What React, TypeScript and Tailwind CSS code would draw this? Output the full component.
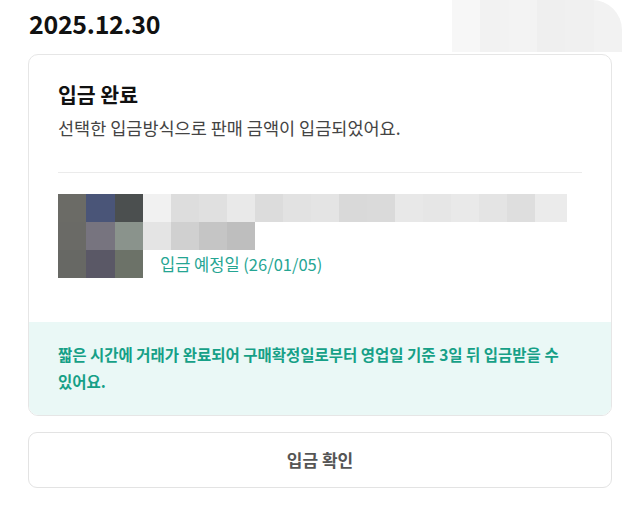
const thumb = [
  ["#6b6b66", "#4a5578", "#4b4f4f"],
  ["#6a6a66", "#77747f", "#8a938c"],
  ["#676864", "#5a5866", "#6c7268"],
]

const nameRow = ["#f1f1f1", "#dddddd", "#e0e0e0", "#e9e9e9", "#dcdcdc", "#e2e2e2", "#e4e4e4", "#d9d9d9", "#dadada", "#e8e8e8", "#e6e6e6", "#e9e9e9", "#e4e4e4", "#dedede", "#ebebeb"]
const subRow = ["#e4e4e4", "#d0d0d0", "#c5c5c5", "#bebebe"]
const topBlur = ["#f7f7f7", "#f2f2f2", "#f3f3f3", "#efefef", "#f0f0f0", "#f2f2f2"]

export default function App() {
  return (
    <div
      className="relative w-[640px] h-[526px] bg-white px-7 pt-[7px] overflow-hidden"
      style={{ fontFamily: "'Noto Sans CJK KR', 'Noto Sans', sans-serif" }}
    >
      {/* redaction smear, top right */}
      <div className="absolute left-[452px] top-0 flex h-[52px] w-[170px] rounded-tr-[30px] overflow-hidden">
        {topBlur.map((c, i) => (
          <div key={i} className="flex-1" style={{ backgroundColor: c }} />
        ))}
      </div>

      <h1 className="relative pl-[1px] text-[25px] font-bold leading-[32px] tracking-[-0.3px] text-[#111]">2025.12.30</h1>

      <div className="mt-[15px] rounded-[10px] border border-[#e6e6e6] overflow-hidden">
        <div className="px-[29px] pt-[25px] pb-[44px]">
          <h2 className="text-[20.5px] font-bold leading-[28px] text-[#111]">입금 완료</h2>
          <p className="mt-[7px] text-[17.5px] leading-[26px] text-[#444]">선택한 입금방식으로 판매 금액이 입금되었어요.</p>
          <div className="mt-[31px] h-px bg-[#ebebeb]" />

          <div className="mt-[21px] flex">
            <div className="grid grid-cols-[28px_29px_28px] grid-rows-[28px_28px_28px] shrink-0">
              {thumb.flat().map((c, i) => (
                <div key={i} style={{ backgroundColor: c }} />
              ))}
            </div>
            <div className="flex flex-col">
              <div className="flex h-[28px]">
                {nameRow.map((c, i) => (
                  <div key={i} className="w-[28px]" style={{ backgroundColor: c }} />
                ))}
                <div className="w-[4px] bg-[#ebebeb]" />
              </div>
              <div className="flex h-[28px]">
                {subRow.map((c, i) => (
                  <div key={i} className="w-[28px]" style={{ backgroundColor: c }} />
                ))}
              </div>
              <p className="pl-[17px] text-[16.5px] leading-[28px] text-[#25a593]">입금 예정일 (26/01/05)</p>
            </div>
          </div>
        </div>

        <div className="bg-[#eaf8f6] px-[29px] pt-[19px] pb-[20px]">
          <p className="break-keep text-[15.5px] font-semibold leading-[27px] text-[#16a087]">
            짧은 시간에 거래가 완료되어 구매확정일로부터 영업일 기준 3일 뒤 입금받을 수 있어요.
          </p>
        </div>
      </div>

      <button className="mt-[16px] flex h-[56px] w-full items-center justify-center rounded-[9px] border border-[#e3e3e3] bg-white text-[17px] font-semibold text-[#555]">
        입금 확인
      </button>
    </div>
  )
}
